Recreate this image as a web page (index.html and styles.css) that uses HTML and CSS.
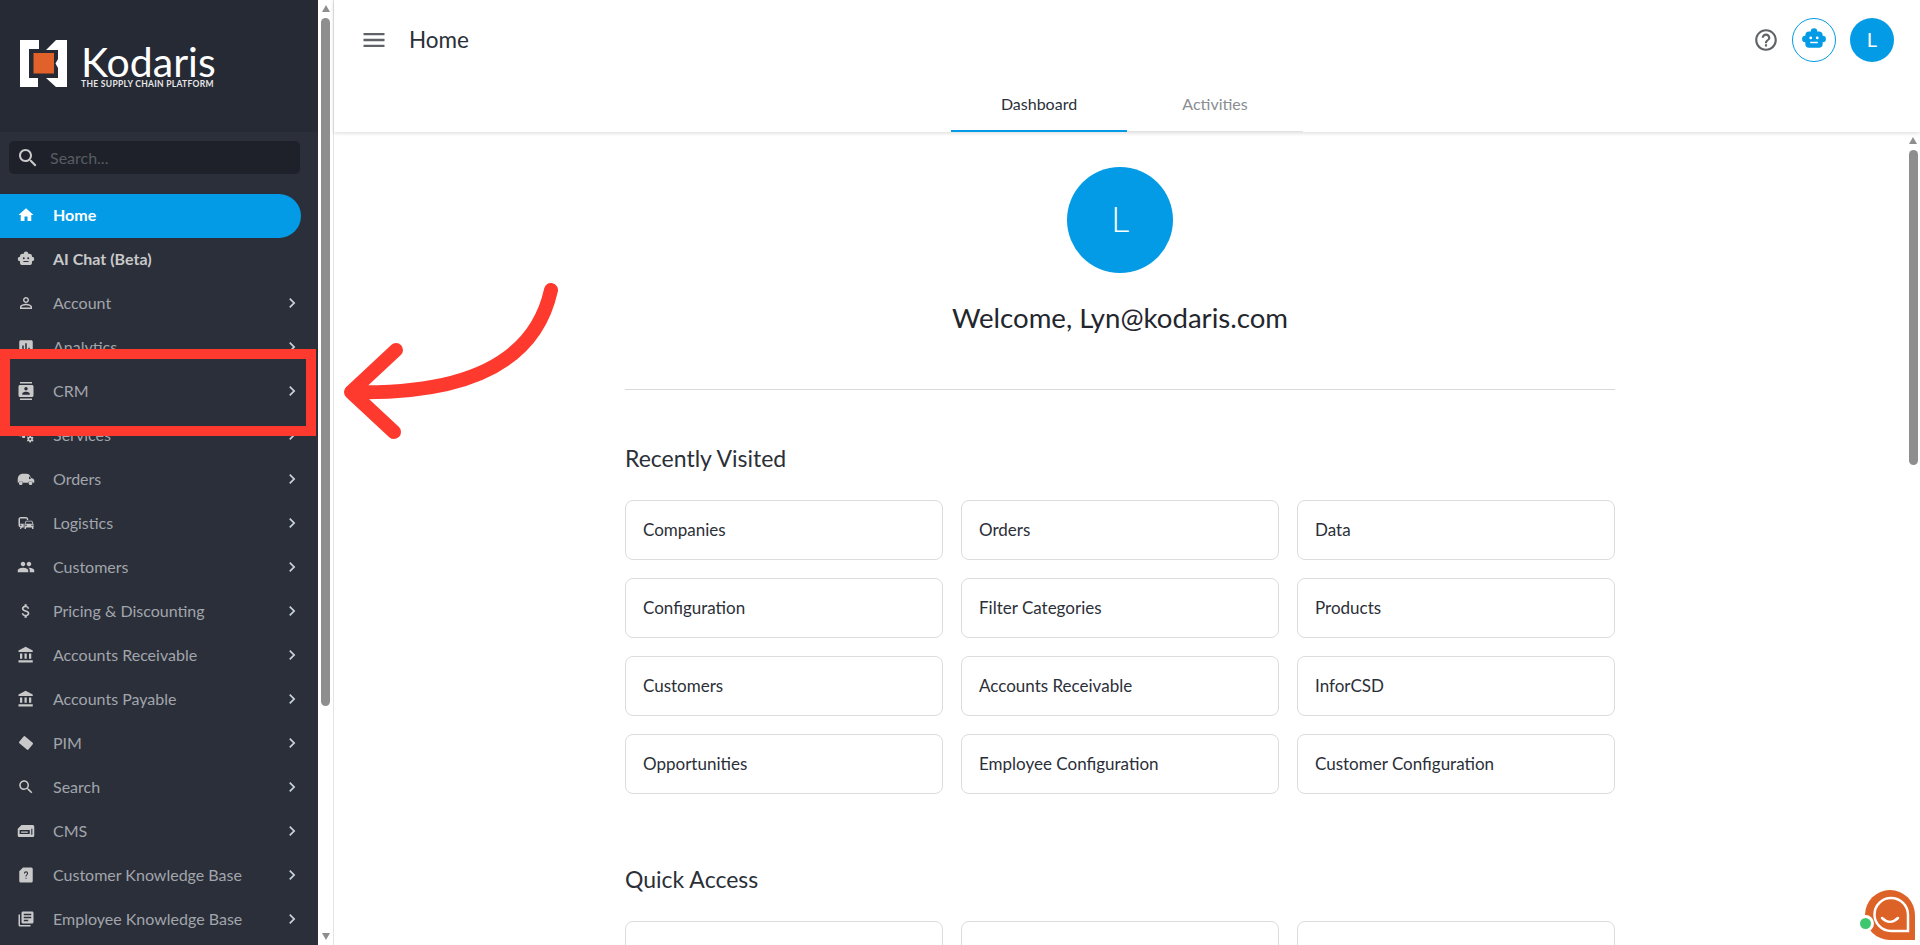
FILE: index.html
```html
<!DOCTYPE html>
<html lang="en">
<head>
  <meta charset="UTF-8">
  <meta name="viewport" content="width=device-width, initial-scale=1.0">
  <title>Home</title>
  <link rel="stylesheet" href="styles.css">
</head>
<body>
  <!-- Left menu -->
  <aside class="sidebar">
    <div class="logo-box">
      <svg class="logo-mark" viewBox="0 0 47 47">
        <polygon fill="#fff" points="0,0 19,0 19,9 9,9 9,38 18,38 18,47 0,47"/>
        <polygon fill="#fff" points="26,10 36,0 47,0 47,47 36,47 26,38 38,38 38,28 35.500,23.500 38,19 38,10"/>
        <rect fill="#e0622a" x="13.500" y="13" width="20.500" height="20.500"/>
      </svg>
      <div class="logo-text">
        <div class="logo-name">Kodaris</div>
        <div class="logo-tag">THE SUPPLY CHAIN PLATFORM</div>
      </div>
    </div>
    <div class="search-box">
      <svg class="search-icon" viewBox="0 0 24 24"><path d="M15.500 14h-.79l-.28-.27C15.410 12.590 16 11.110 16 9.500 16 5.910 13.090 3 9.500 3S3 5.910 3 9.500 5.910 16 9.500 16c1.610 0 3.090-.59 4.230-1.570l.27.28v.79l5 4.990L20.490 19l-4.990-5zm-6 0C7.010 14 5 11.990 5 9.500S7.010 5 9.500 5 14 7.010 14 9.500 11.990 14 9.500 14z"/></svg>
      <span class="search-text">Search...</span>
    </div>
    <nav class="menu">
      <a class="menu-item active"><svg class="menu-icon" viewBox="0 0 24 24"><path d="M10 20v-6h4v6h5v-8h3L12 3 2 12h3v8z"/></svg><span class="menu-label">Home</span></a>
      <a class="menu-item beta"><svg class="menu-icon" viewBox="0 0 24 24"><path fill-rule="evenodd" d="M12 2a3 3 0 0 1 3 3h1.500A3.500 3.500 0 0 1 20 8.500V9a3 3 0 0 1 0 6v1.500A3.500 3.500 0 0 1 16.500 20h-9A3.500 3.500 0 0 1 4 16.500V15a3 3 0 0 1 0-6v-.5A3.500 3.500 0 0 1 7.500 5H9a3 3 0 0 1 3-3zM9 9.700a1.300 1.300 0 1 0 0 2.600 1.300 1.300 0 0 0 0-2.600zM15 9.700a1.300 1.300 0 1 0 0 2.600 1.300 1.300 0 0 0 0-2.600zM8.500 14.500V16h7v-1.500z"/></svg><span class="menu-label">AI Chat (Beta)</span></a>
      <a class="menu-item"><svg class="menu-icon" viewBox="0 0 24 24"><path d="M12 5.900c1.160 0 2.100.94 2.100 2.100s-.94 2.100-2.100 2.100S9.900 9.160 9.900 8s.94-2.100 2.100-2.100m0 9c2.970 0 6.100 1.460 6.100 2.100v1.100H5.900V17c0-.64 3.130-2.100 6.100-2.100M12 4C9.790 4 8 5.790 8 8s1.790 4 4 4 4-1.790 4-4-1.790-4-4-4zm0 9c-2.670 0-8 1.340-8 4v3h16v-3c0-2.660-5.330-4-8-4z"/></svg><span class="menu-label">Account</span><svg class="chevron" viewBox="0 0 24 24"><path d="M10 6L8.590 7.410 13.170 12l-4.580 4.590L10 18l6-6z"/></svg></a>
      <a class="menu-item"><svg class="menu-icon" viewBox="0 0 24 24"><path d="M19 3H5c-1.100 0-2 .9-2 2v14c0 1.100.9 2 2 2h14c1.100 0 2-.9 2-2V5c0-1.100-.9-2-2-2zM9 17H7v-7h2v7zm4 0h-2V7h2v10zm4 0h-2v-4h2v4z"/></svg><span class="menu-label">Analytics</span><svg class="chevron" viewBox="0 0 24 24"><path d="M10 6L8.590 7.410 13.170 12l-4.580 4.590L10 18l6-6z"/></svg></a>
      <a class="menu-item"><svg class="menu-icon" viewBox="0 0 24 24"><path d="M20 0H4v2h16V0zM4 24h16v-2H4v2zM20 4H4c-1.100 0-2 .9-2 2v12c0 1.100.9 2 2 2h16c1.100 0 2-.9 2-2V6c0-1.100-.9-2-2-2zm-8 2.750c1.240 0 2.250 1.010 2.250 2.250s-1.010 2.250-2.250 2.250S9.750 10.240 9.750 9 10.760 6.750 12 6.750zM17 17H7v-1.500c0-1.670 3.330-2.500 5-2.500s5 .83 5 2.500V17z"/></svg><span class="menu-label">CRM</span><svg class="chevron" viewBox="0 0 24 24"><path d="M10 6L8.590 7.410 13.170 12l-4.580 4.590L10 18l6-6z"/></svg></a>
      <a class="menu-item"><svg class="menu-icon" viewBox="0 0 24 24"><path d="M14.170 13.710l1.400-2.420c.09-.15.05-.34-.08-.45l-1.480-1.160c.03-.22.05-.45.05-.68s-.02-.46-.05-.69l1.480-1.160c.13-.11.17-.3.08-.45l-1.400-2.420c-.09-.15-.27-.21-.43-.15l-1.740.7c-.36-.28-.75-.51-1.180-.69l-.26-1.850c-.03-.16-.17-.29-.34-.29h-2.800c-.17 0-.32.13-.35.3L6.800 4.150c-.42.18-.82.41-1.180.69l-1.740-.7c-.16-.06-.34 0-.43.15l-1.400 2.420c-.09.15-.05.34.08.45l1.480 1.160c-.03.22-.05.45-.05.68s.02.46.05.69l-1.480 1.160c-.13.11-.17.3-.08.45l1.400 2.420c.09.15.27.21.43.15l1.740-.7c.36.28.75.51 1.180.69l.26 1.850c.03.16.17.29.34.29h2.800c.17 0 .32-.13.35-.3l.26-1.850c.42-.18.82-.41 1.180-.69l1.740.7c.16.06.34 0 .43-.15zM8.810 11c-1.100 0-2-.9-2-2s.9-2 2-2 2 .9 2 2-.9 2-2 2zM21.920 18.670l-.96-.74c.02-.14.04-.29.04-.44 0-.15-.01-.3-.04-.44l.95-.74c.08-.07.11-.19.05-.29l-.9-1.550c-.05-.1-.17-.13-.28-.1l-1.110.45c-.23-.18-.48-.33-.76-.44l-.17-1.180c-.01-.12-.11-.2-.21-.2h-1.790c-.11 0-.21.08-.22.19l-.17 1.180c-.27.12-.53.26-.76.44l-1.110-.45c-.1-.04-.22 0-.28.1l-.9 1.550c-.05.1-.04.22.05.29l.95.74c-.02.14-.03.29-.03.44 0 .15.01.3.03.44l-.95.74c-.08.07-.11.19-.05.29l.9 1.550c.05.1.17.13.28.1l1.110-.45c.23.18.48.33.76.44l.17 1.180c.02.11.11.19.22.19h1.790c.11 0 .21-.08.22-.19l.17-1.180c.27-.12.53-.26.75-.44l1.120.45c.1.04.22 0 .28-.1l.9-1.550c.06-.09.03-.21-.05-.28zm-4.290.16c-.74 0-1.350-.6-1.350-1.350s.6-1.350 1.350-1.350 1.350.6 1.350 1.350-.61 1.350-1.350 1.350z"/></svg><span class="menu-label">Services</span><svg class="chevron" viewBox="0 0 24 24"><path d="M10 6L8.590 7.410 13.170 12l-4.580 4.590L10 18l6-6z"/></svg></a>
      <a class="menu-item"><svg class="menu-icon" viewBox="0 0 24 24"><path fill-rule="evenodd" d="M1 17v-5c0-4 3-7 7-7h5c2 0 3.500 1 4.500 3l1 2.200 3 1.300c1 .5 1.500 1.200 1.500 2.200V17h-1.900a3.200 3.200 0 0 0-6.200 0H8.100a3.200 3.200 0 0 0-6.200 0zM16 8.500V12h2.500l-1.100-2.700c-.2-.5-.7-.8-1.400-.8zM5 15a2.500 2.500 0 1 1 0 5 2.500 2.500 0 0 1 0-5zM18 15a2.500 2.500 0 1 1 0 5 2.500 2.500 0 0 1 0-5z"/></svg><span class="menu-label">Orders</span><svg class="chevron" viewBox="0 0 24 24"><path d="M10 6L8.590 7.410 13.170 12l-4.580 4.590L10 18l6-6z"/></svg></a>
      <a class="menu-item"><svg class="menu-icon" viewBox="0 0 24 24"><path d="M12 4H5C3.340 4 2 5.340 2 7v8c0 1.660 1.340 3 3 3l-1 1v1h1l2-2.030L9 18v-5H4V5.980L13 6v2h2V7c0-1.660-1.340-3-3-3zM5 14c.55 0 1 .45 1 1s-.45 1-1 1-1-.45-1-1 .45-1 1-1zm15.570-4.340c-.14-.4-.52-.66-.97-.66h-7.190c-.46 0-.83.26-.98.66L10 13.770l.01 5.510c0 .38.31.72.69.72h.62c.38 0 .68-.38.68-.76V18h8v1.240c0 .38.31.76.69.76h.61c.38 0 .69-.34.69-.72l.01-1.370v-4.140l-1.430-4.110zm-8.160.34h7.190l1.030 3h-9.250l1.030-3zM12 16c-.55 0-1-.45-1-1s.45-1 1-1 1 .45 1 1-.45 1-1 1zm8 0c-.55 0-1-.45-1-1s.45-1 1-1 1 .45 1 1-.45 1-1 1z"/></svg><span class="menu-label">Logistics</span><svg class="chevron" viewBox="0 0 24 24"><path d="M10 6L8.590 7.410 13.170 12l-4.580 4.590L10 18l6-6z"/></svg></a>
      <a class="menu-item"><svg class="menu-icon" viewBox="0 0 24 24"><path d="M16 11c1.660 0 2.990-1.340 2.990-3S17.660 5 16 5c-1.660 0-3 1.340-3 3s1.340 3 3 3zm-8 0c1.660 0 2.990-1.340 2.990-3S9.660 5 8 5C6.340 5 5 6.340 5 8s1.340 3 3 3zm0 2c-2.330 0-7 1.170-7 3.500V19h14v-2.500c0-2.330-4.670-3.500-7-3.500zm8 0c-.29 0-.62.02-.97.05 1.160.84 1.970 1.970 1.970 3.450V19h6v-2.500c0-2.330-4.670-3.500-7-3.500z"/></svg><span class="menu-label">Customers</span><svg class="chevron" viewBox="0 0 24 24"><path d="M10 6L8.590 7.410 13.170 12l-4.580 4.590L10 18l6-6z"/></svg></a>
      <a class="menu-item"><svg class="menu-icon" viewBox="0 0 24 24"><path d="M11.800 10.900c-2.270-.59-3-1.200-3-2.150 0-1.090 1.010-1.850 2.700-1.850 1.780 0 2.440.85 2.500 2.100h2.210c-.07-1.720-1.120-3.300-3.210-3.810V3h-3v2.160c-1.940.42-3.500 1.680-3.500 3.610 0 2.310 1.910 3.460 4.700 4.130 2.500.6 3 1.480 3 2.410 0 .69-.49 1.790-2.700 1.790-2.060 0-2.870-.92-2.980-2.100h-2.200c.12 2.190 1.760 3.420 3.680 3.830V21h3v-2.150c1.950-.37 3.500-1.500 3.500-3.550 0-2.840-2.430-3.810-4.700-4.400z"/></svg><span class="menu-label">Pricing &amp; Discounting</span><svg class="chevron" viewBox="0 0 24 24"><path d="M10 6L8.590 7.410 13.170 12l-4.580 4.590L10 18l6-6z"/></svg></a>
      <a class="menu-item"><svg class="menu-icon" viewBox="0 0 24 24"><path d="M4 10v7h3v-7H4zm6 0v7h3v-7h-3zM2 22h19v-3H2v3zm14-12v7h3v-7h-3zm-4.500-9L2 6v2h19V6l-9.500-5z"/></svg><span class="menu-label">Accounts Receivable</span><svg class="chevron" viewBox="0 0 24 24"><path d="M10 6L8.590 7.410 13.170 12l-4.580 4.590L10 18l6-6z"/></svg></a>
      <a class="menu-item"><svg class="menu-icon" viewBox="0 0 24 24"><path d="M4 10v7h3v-7H4zm6 0v7h3v-7h-3zM2 22h19v-3H2v3zm14-12v7h3v-7h-3zm-4.500-9L2 6v2h19V6l-9.500-5z"/></svg><span class="menu-label">Accounts Payable</span><svg class="chevron" viewBox="0 0 24 24"><path d="M10 6L8.590 7.410 13.170 12l-4.580 4.590L10 18l6-6z"/></svg></a>
      <a class="menu-item"><svg class="menu-icon" viewBox="0 0 24 24"><rect x="4" y="6" width="16" height="12" rx="1.500" transform="rotate(40 12 12)"/></svg><span class="menu-label">PIM</span><svg class="chevron" viewBox="0 0 24 24"><path d="M10 6L8.590 7.410 13.170 12l-4.580 4.590L10 18l6-6z"/></svg></a>
      <a class="menu-item"><svg class="menu-icon" viewBox="0 0 24 24"><path d="M15.500 14h-.79l-.28-.27C15.410 12.590 16 11.110 16 9.500 16 5.910 13.090 3 9.500 3S3 5.910 3 9.500 5.910 16 9.500 16c1.610 0 3.090-.59 4.230-1.570l.27.28v.79l5 4.990L20.490 19l-4.990-5zm-6 0C7.010 14 5 11.990 5 9.500S7.010 5 9.500 5 14 7.010 14 9.500 11.990 14 9.500 14z"/></svg><span class="menu-label">Search</span><svg class="chevron" viewBox="0 0 24 24"><path d="M10 6L8.590 7.410 13.170 12l-4.580 4.590L10 18l6-6z"/></svg></a>
      <a class="menu-item"><svg class="menu-icon" viewBox="0 0 24 24"><path fill-rule="evenodd" d="M6 4h15a2 2 0 0 1 2 2v12a2 2 0 0 1-2 2H3a2 2 0 0 1-2-2V9zM3.500 10.500V16H17v-5.500zM5.500 12.800h9v1.500h-9zM19 9v8h1.500V9z"/></svg><span class="menu-label">CMS</span><svg class="chevron" viewBox="0 0 24 24"><path d="M10 6L8.590 7.410 13.170 12l-4.580 4.590L10 18l6-6z"/></svg></a>
      <a class="menu-item"><svg class="menu-icon" viewBox="0 0 24 24"><path d="M8 2h11a2 2 0 0 1 2 2v16a2 2 0 0 1-2 2H5a2 2 0 0 1-2-2V7z"/><path class="icon-hole" transform="translate(3.600 3.600) scale(.7)" d="M15.070 11.250l-.9.92C13.450 12.900 13 13.500 13 15h-2v-.5c0-1.100.45-2.100 1.170-2.830l1.240-1.260c.37-.36.59-.86.59-1.410 0-1.100-.9-2-2-2s-2 .9-2 2H8c0-2.210 1.790-4 4-4s4 1.790 4 4c0 .88-.36 1.680-.93 2.250zM13 19h-2v-2h2v2z"/></svg><span class="menu-label">Customer Knowledge Base</span><svg class="chevron" viewBox="0 0 24 24"><path d="M10 6L8.590 7.410 13.170 12l-4.580 4.590L10 18l6-6z"/></svg></a>
      <a class="menu-item"><svg class="menu-icon" viewBox="0 0 24 24"><path d="M4 6H2v14c0 1.100.9 2 2 2h14v-2H4V6zm16-4H8c-1.100 0-2 .9-2 2v12c0 1.100.9 2 2 2h12c1.100 0 2-.9 2-2V4c0-1.100-.9-2-2-2zm-1 9H9V9h10v2zm-4 4H9v-2h6v2zm4-8H9V5h10v2z"/></svg><span class="menu-label">Employee Knowledge Base</span><svg class="chevron" viewBox="0 0 24 24"><path d="M10 6L8.590 7.410 13.170 12l-4.580 4.590L10 18l6-6z"/></svg></a>
    </nav>
  </aside>

  <!-- Scrollbar of the menu -->
  <div class="side-scroll">
    <div class="arrow-up"></div>
    <div class="side-thumb"></div>
    <div class="arrow-down"></div>
  </div>

  <main class="main">
    <header class="topbar">
      <div class="topbar-row">
        <svg class="hamburger" viewBox="0 0 24 24"><path d="M3 18h18v-2H3v2zm0-5h18v-2H3v2zm0-7v2h18V6H3z"/></svg>
        <h1 class="page-title">Home</h1>
        <div class="topbar-actions">
          <svg class="help-icon" viewBox="0 0 24 24"><path d="M11 18h2v-2h-2v2zm1-16C6.480 2 2 6.480 2 12s4.480 10 10 10 10-4.480 10-10S17.520 2 12 2zm0 18c-4.410 0-8-3.590-8-8s3.590-8 8-8 8 3.590 8 8-3.590 8-8 8zm0-14c-2.210 0-4 1.790-4 4h2c0-1.100.9-2 2-2s2 .9 2 2c0 2-3 1.750-3 5h2c0-2.250 3-2.500 3-5 0-2.210-1.790-4-4-4z"/></svg>
          <div class="bot-btn"><svg viewBox="0 0 24 24"><path fill-rule="evenodd" d="M12 2a3 3 0 0 1 3 3h1.500A3.500 3.500 0 0 1 20 8.500V9a3 3 0 0 1 0 6v1.500A3.500 3.500 0 0 1 16.500 20h-9A3.500 3.500 0 0 1 4 16.500V15a3 3 0 0 1 0-6v-.5A3.500 3.500 0 0 1 7.500 5H9a3 3 0 0 1 3-3zM9 9.700a1.300 1.300 0 1 0 0 2.600 1.300 1.300 0 0 0 0-2.600zM15 9.700a1.300 1.300 0 1 0 0 2.600 1.300 1.300 0 0 0 0-2.600zM8.500 14.500V16h7v-1.500z"/></svg></div>
          <div class="user-btn">L</div>
        </div>
      </div>
      <div class="tabs">
        <div class="tab tab-active">Dashboard</div>
        <div class="tab">Activities</div>
      </div>
    </header>

    <div class="body-row">
      <div class="content">
        <div class="welcome">
          <div class="big-avatar">L</div>
          <div class="welcome-text">Welcome, Lyn@kodaris.com</div>
        </div>
        <hr class="divider">

        <h2 class="section-title">Recently Visited</h2>
        <div class="card-grid">
          <div class="card">Companies</div>
          <div class="card">Orders</div>
          <div class="card">Data</div>
          <div class="card">Configuration</div>
          <div class="card">Filter Categories</div>
          <div class="card">Products</div>
          <div class="card">Customers</div>
          <div class="card">Accounts Receivable</div>
          <div class="card">InforCSD</div>
          <div class="card">Opportunities</div>
          <div class="card">Employee Configuration</div>
          <div class="card">Customer Configuration</div>
        </div>

        <h2 class="section-title quick-title">Quick Access</h2>
        <div class="card-grid">
          <div class="card"></div>
          <div class="card"></div>
          <div class="card"></div>
        </div>
      </div>
      <div class="main-scroll">
        <div class="arrow-up"></div>
        <div class="main-thumb"></div>
      </div>
    </div>
  </main>

  <!-- Annotation on top of the screenshot -->
  <div class="mark-box"></div>
  <svg class="mark-arrow" viewBox="0 0 230 170">
    <path d="M216 7C200 80 130 112 16 109M61 67L16 109L59 149"/>
  </svg>

  <!-- Chat widget -->
  <div class="chat-widget">
    <svg viewBox="0 0 50 50">
      <path fill="#dd6227" d="M25 0A25 25 0 0 0 0 25A25 25 0 0 0 25 50H50V25A25 25 0 0 0 25 0z"/>
      <path fill="none" stroke="#fff" stroke-width="2.500" d="M26 8A16.500 16.500 0 0 0 26 41H43V25A17 17 0 0 0 26 8z"/>
      <path fill="none" stroke="#fff" stroke-width="2.500" stroke-linecap="round" d="M17 28C22 33 28 33 33 28"/>
    </svg>
    <div class="chat-dot"></div>
  </div>
</body>
</html>
```

FILE: styles.css
```css
body {
  font-family: 'Lato', 'Noto Sans', sans-serif;
  margin: 0;
  padding: 0;
  height: 100vh;
  overflow: hidden;
  display: flex;
  background: #fff;
  color: #2b2f38;
}

/* Left menu */
.sidebar {
  width: 318px;
  flex-shrink: 0;
  background: #2a2f3a;
  overflow: hidden;
}

.logo-box {
  height: 132px;
  background: #252a35;
  display: flex;
  align-items: flex-start;
  padding: 40px 0 0 20px;
  box-sizing: border-box;
}

.logo-mark {
  width: 47px;
  height: 47px;
  flex-shrink: 0;
}

.logo-text {
  margin-left: 14px;
  color: #fff;
}

.logo-name {
  font-size: 41px;
  line-height: 36px;
  margin-top: 4px;
}

.logo-tag {
  font-size: 8.500px;
  font-weight: 700;
  line-height: 9px;
  letter-spacing: 0.300px;
  color: #e6e6e6;
  white-space: nowrap;
}

.search-box {
  height: 33px;
  margin: 9px 18px 20px 9px;
  background: #1e2129;
  border-radius: 5px;
  display: flex;
  align-items: center;
  padding-left: 7px;
}

.search-icon {
  width: 24px;
  height: 24px;
  fill: #c9c9c9;
}

.search-text {
  margin-left: 10px;
  font-size: 16px;
  color: #585c63;
}

.menu-item {
  height: 44px;
  box-sizing: border-box;
  padding: 0 0 2px 17px;
  display: flex;
  align-items: center;
  color: #a2a5ab;
  font-size: 16px;
}

.menu-item.active {
  width: 301px;
  background: #039be5;
  border-radius: 0 22px 22px 0;
  color: #fff;
  font-weight: 700;
}

.menu-item.beta {
  color: #c9c9c9;
  font-weight: 700;
}

.menu-icon {
  width: 18px;
  height: 18px;
  fill: #c9c9c9;
  flex-shrink: 0;
}

.active .menu-icon {
  fill: #fff;
}

.icon-hole {
  fill: #2a2f3a;
}

.menu-label {
  margin-left: 18px;
  padding-bottom: 2px;
  flex: 1;
  white-space: nowrap;
}

.chevron {
  width: 20px;
  height: 20px;
  fill: #c9d2d8;
  margin-right: 16px;
}

/* Scrollbars */
.side-scroll {
  width: 16px;
  flex-shrink: 0;
  border-right: 1px solid #e4e4e4;
  display: flex;
  flex-direction: column;
  align-items: center;
  padding: 5px 0 5px;
  box-sizing: border-box;
  height: 100%;
}

.arrow-up {
  width: 0;
  height: 0;
  border-left: 4.500px solid transparent;
  border-right: 4.500px solid transparent;
  border-bottom: 7px solid #8e8e8e;
}

.arrow-down {
  width: 0;
  height: 0;
  margin-top: auto;
  border-left: 4.500px solid transparent;
  border-right: 4.500px solid transparent;
  border-top: 7px solid #8e8e8e;
}

.side-thumb {
  width: 9px;
  height: 688px;
  margin-top: 6px;
  background: #8e8e8e;
  border-radius: 5px;
}

.main-scroll {
  width: 14px;
  flex-shrink: 0;
  display: flex;
  flex-direction: column;
  align-items: center;
  padding-top: 5px;
}

.main-thumb {
  width: 9px;
  height: 315px;
  margin-top: 6px;
  background: #8e8e8e;
  border-radius: 5px;
}

/* Main part */
.main {
  flex: 1;
  min-width: 0;
  display: flex;
  flex-direction: column;
}

.topbar {
  height: 132px;
  flex-shrink: 0;
  box-shadow: 0 1px 4px rgba(0, 0, 0, 0.15);
  position: relative;
  box-sizing: border-box;
}

.topbar-row {
  height: 80px;
  display: flex;
  align-items: center;
  padding: 0 26px 0 26px;
}

.hamburger {
  width: 28px;
  height: 28px;
  fill: #5f6368;
}

.page-title {
  margin: 0 0 2px 21px;
  font-size: 22.500px;
  font-weight: 400;
  color: #2b2f38;
  flex: 1;
}

.topbar-actions {
  display: flex;
  align-items: center;
}

.help-icon {
  width: 26px;
  height: 26px;
  fill: #5f6368;
  margin-right: 13px;
}

.bot-btn {
  width: 44px;
  height: 44px;
  box-sizing: border-box;
  padding-bottom: 2px;
  border: 1px solid #039be5;
  border-radius: 50%;
  display: flex;
  align-items: center;
  justify-content: center;
}

.bot-btn svg {
  width: 26px;
  height: 26px;
  fill: #039be5;
}

.user-btn {
  width: 44px;
  height: 44px;
  box-sizing: border-box;
  padding-bottom: 2px;
  margin-left: 14px;
  border-radius: 50%;
  background: #039be5;
  color: #fff;
  font-size: 20px;
  display: flex;
  align-items: center;
  justify-content: center;
}

.tabs {
  width: 352px;
  height: 51px;
  margin: 0 auto;
  display: flex;
  border-bottom: 1px solid #e2e2e2;
}

.tab {
  flex: 1;
  text-align: center;
  font-size: 16px;
  color: #8a8d92;
  line-height: 48px;
}

.tab-active {
  color: #2b2f38;
  height: 50px;
  border-bottom: 2px solid #039be5;
}

.body-row {
  flex: 1;
  min-height: 0;
  display: flex;
}

.content {
  flex: 1;
  min-width: 0;
  overflow: hidden;
  padding: 35px 291px 0;
  box-sizing: border-box;
}

.welcome {
  display: flex;
  flex-direction: column;
  align-items: center;
}

.big-avatar {
  width: 106px;
  height: 106px;
  box-sizing: border-box;
  padding-bottom: 5px;
  border-radius: 50%;
  background: #039be5;
  color: #fff;
  font-size: 36px;
  font-weight: 300;
  display: flex;
  align-items: center;
  justify-content: center;
}

.welcome-text {
  margin-top: 27px;
  font-size: 27.600px;
  line-height: 36px;
  color: #23262d;
}

.divider {
  border: 0;
  border-top: 1px solid #d9d9d9;
  margin: 53px 0 0;
}

.section-title {
  margin: 54px 0 28px;
  font-size: 23px;
  line-height: 28px;
  font-weight: 400;
  color: #2b2f38;
}

.quick-title {
  margin-top: 71px;
  margin-bottom: 28px;
}

.card-grid {
  display: grid;
  grid-template-columns: repeat(3, 1fr);
  gap: 18px;
}

.card {
  height: 60px;
  box-sizing: border-box;
  border: 1px solid #dcdcdc;
  border-radius: 8px;
  padding: 0 17px 1px;
  display: flex;
  align-items: center;
  font-size: 17px;
  color: #2b2f38;
}

/* Red annotation */
.mark-box {
  position: absolute;
  left: 0;
  top: 349px;
  width: 316px;
  height: 87px;
  box-sizing: border-box;
  border: 10px solid #fd3a2d;
}

.mark-arrow {
  position: absolute;
  left: 335px;
  top: 283px;
  width: 230px;
  height: 170px;
  fill: none;
  stroke: #fd3a2d;
  stroke-width: 14;
  stroke-linecap: round;
  stroke-linejoin: round;
}

/* Chat widget */
.chat-widget {
  position: absolute;
  left: 1865px;
  top: 890px;
  width: 50px;
  height: 50px;
}

.chat-dot {
  position: absolute;
  left: -8px;
  top: 25px;
  width: 11px;
  height: 11px;
  border: 3px solid #fff;
  border-radius: 50%;
  background: #3fc76f;
}
```
